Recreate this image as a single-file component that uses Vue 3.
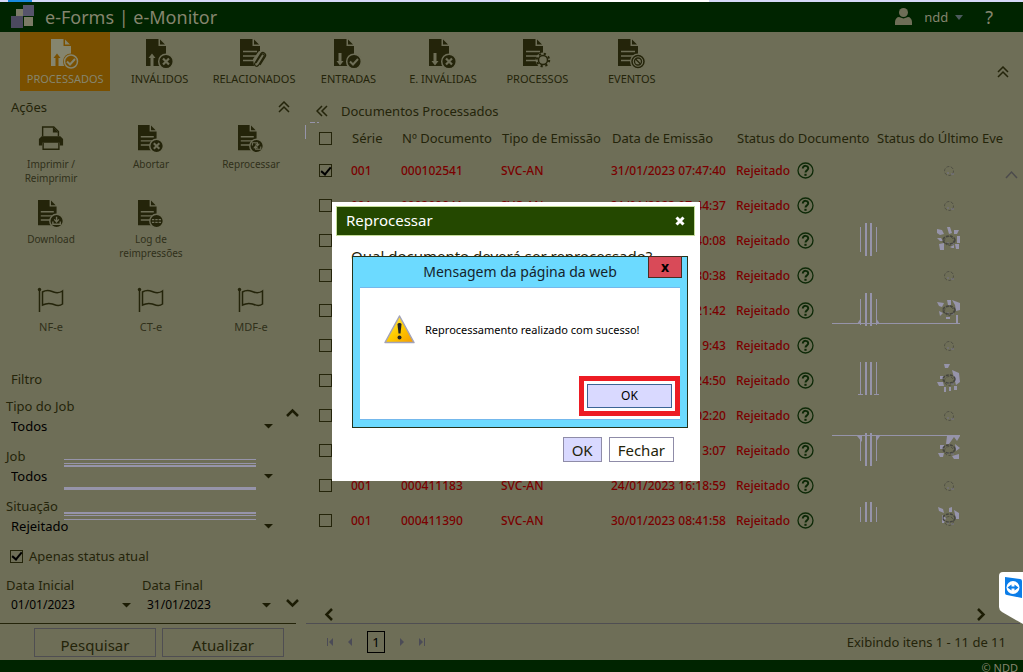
<script setup>
import { ref } from 'vue'

const tabs = [
  { label: 'PROCESSADOS', mark: 'up', badge: 'check', active: true },
  { label: 'INVÁLIDOS', mark: 'up', badge: 'cross' },
  { label: 'RELACIONADOS', mark: 'lines', badge: 'clip' },
  { label: 'ENTRADAS', mark: 'down', badge: 'check' },
  { label: 'E. INVÁLIDAS', mark: 'down', badge: 'cross' },
  { label: 'PROCESSOS', mark: 'lines', badge: 'gear' },
  { label: 'EVENTOS', mark: 'lines', badge: 'ban' },
]

const actions = [
  { label: 'Imprimir / Reimprimir', badge: 'print' },
  { label: 'Abortar', badge: 'cross' },
  { label: 'Reprocessar', badge: 'redo' },
  { label: 'Download', badge: 'save' },
  { label: 'Log de reimpressões', badge: 'csv' },
]

const flags = ['NF-e', 'CT-e', 'MDF-e']

const selects = [
  { id: 'tipo', label: 'Tipo do Job', value: 'Todos' },
  { id: 'job', label: 'Job', value: 'Todos' },
  { id: 'situacao', label: 'Situação', value: 'Rejeitado' },
]

const columns = ['Série', 'Nº Documento', 'Tipo de Emissão', 'Data de Emissão', 'Status do Documento', 'Status do Último Evento']

const rows = ref([
  { doc: '000102541', date: '31/01/2023 07:47:40', on: true },
  { doc: '000309841', date: '31/01/2023 07:44:37' },
  { doc: '000310127', date: '31/01/2023 07:40:08' },
  { doc: '000310204', date: '31/01/2023 07:30:38' },
  { doc: '000310355', date: '30/01/2023 17:21:42' },
  { doc: '000410712', date: '30/01/2023 16:19:43' },
  { doc: '000410820', date: '27/01/2023 15:24:50' },
  { doc: '000410955', date: '26/01/2023 14:02:20' },
  { doc: '000411021', date: '25/01/2023 10:13:07' },
  { doc: '000411183', date: '24/01/2023 16:18:59' },
  { doc: '000411390', date: '30/01/2023 08:41:58' },
])

const current = ref(true)
</script>

<template>
  <div class="app">
    <svg class="defs" aria-hidden="true">
      <symbol id="doc" viewBox="0 0 28 30">
        <path d="M0 0h12.500v7H20v20H0z" fill="currentColor" />
        <path d="M14 .5v5h5z" fill="currentColor" />
      </symbol>
      <symbol id="up" viewBox="0 0 28 30"><path d="M6 14.500l-3.500 4.500h2v8h3v-8h2z" fill="var(--bg)" /></symbol>
      <symbol id="down" viewBox="0 0 28 30"><path d="M6 26.500l-3.500-4.500h2v-8h3v8h2z" fill="var(--bg)" /></symbol>
      <symbol id="lines" viewBox="0 0 28 30"><path d="M3 12.500h14M3 17h14M3 21.500h12" stroke="var(--bg)" stroke-width="1.500" /></symbol>
      <symbol id="check" viewBox="0 0 28 30">
        <circle cx="20" cy="22.500" r="7.300" fill="currentColor" stroke="var(--bg)" stroke-width="1.500" />
        <path d="M16 22.500l3 3 5-5.500" fill="none" stroke="var(--bg)" stroke-width="2" />
      </symbol>
      <symbol id="check-open" viewBox="0 0 28 30">
        <circle cx="20" cy="22.500" r="8" fill="var(--bg)" />
        <circle cx="20" cy="22.500" r="6.500" fill="none" stroke="currentColor" stroke-width="1.500" />
        <path d="M16 22.500l3 3 5-5.500" fill="none" stroke="currentColor" stroke-width="2" />
      </symbol>
      <symbol id="cross" viewBox="0 0 28 30">
        <circle cx="20" cy="22.500" r="7.300" fill="currentColor" stroke="var(--bg)" stroke-width="1.500" />
        <path d="M17 19.500l6 6m0-6l-6 6" stroke="var(--bg)" stroke-width="2.200" />
      </symbol>
      <symbol id="clip" viewBox="0 0 28 30">
        <path d="M14 27l-1-7 6-8 7 1v7l-7 9z" fill="var(--bg)" />
        <path d="M16 24l5.500-8.500c1-1.500 3.500 0 2.500 1.700l-5.500 9c-1.500 2.300-4.800.4-3.600-2l5.600-9.200c2-3.200 6.500-.6 4.700 2.600L20 26" fill="none" stroke="currentColor" stroke-width="1.200" />
      </symbol>
      <symbol id="gear" viewBox="0 0 28 30">
        <circle cx="20" cy="21" r="7.500" fill="var(--bg)" />
        <circle cx="20" cy="21" r="6.200" fill="none" stroke="currentColor" stroke-width="2" stroke-dasharray="2.200 2.670" />
        <circle cx="20" cy="21" r="4.500" fill="none" stroke="currentColor" stroke-width="1.500" />
      </symbol>
      <symbol id="ban" viewBox="0 0 28 30">
        <circle cx="20" cy="22.500" r="8" fill="var(--bg)" />
        <circle cx="20" cy="22.500" r="6" fill="none" stroke="currentColor" stroke-width="1.500" />
        <circle cx="20" cy="22.500" r="3.500" fill="none" stroke="currentColor" stroke-width="1.300" />
        <path d="M17.500 20l5 5" stroke="currentColor" stroke-width="1.300" />
      </symbol>
      <symbol id="redo" viewBox="0 0 28 30">
        <circle cx="20" cy="22.500" r="7.300" fill="currentColor" stroke="var(--bg)" stroke-width="1.500" />
        <path d="M15.500 22v-3h5.500v3m-2-2l2 2.500 2-2.500M24.500 23v3H19v-3m2 2l-2-2.500-2 2.500" fill="none" stroke="var(--bg)" stroke-width="1.200" />
      </symbol>
      <symbol id="save" viewBox="0 0 28 30">
        <circle cx="20" cy="22.500" r="7.300" fill="currentColor" stroke="var(--bg)" stroke-width="1.500" />
        <path d="M20 18v5m-2.500-2.200L20 23.500l2.500-2.700M16 23v3h8v-3" fill="none" stroke="var(--bg)" stroke-width="1.500" />
      </symbol>
      <symbol id="csv" viewBox="0 0 28 30">
        <circle cx="20" cy="22.500" r="7.300" fill="currentColor" stroke="var(--bg)" stroke-width="1.500" />
        <path d="M15 21h10M15 24h10" fill="none" stroke="var(--bg)" stroke-width="1.200" stroke-dasharray="2.600 1" />
      </symbol>
      <symbol id="print" viewBox="0 0 28 30">
        <path d="M5 12V2h12l5 5v5" fill="none" stroke="currentColor" stroke-width="1.500" />
        <path d="M16 2v6h6z" fill="currentColor" />
        <path d="M4 12h20l3 3v7h-3.500v-3h-19v3H1v-7z" fill="currentColor" />
        <path d="M5.500 19v7h17v-7" fill="none" stroke="currentColor" stroke-width="1.500" />
      </symbol>
    </svg>

    <div class="strip"></div>
    <header class="top">
      <svg class="logo" width="24" height="24" viewBox="0 0 24 24">
        <path d="M12 0h11v11H12z" fill="#56546b" /><path d="M5 4h7v7H5z" fill="#7b7b66" />
        <path d="M0 11h12v12H0z" fill="#4b495e" /><path d="M13 12h9v9h-9z" fill="#7b7b66" />
      </svg>
      <h1>e-Forms | e-Monitor</h1>
      <svg width="17" height="18" viewBox="0 0 17 18"><circle cx="8.500" cy="4.500" r="4.500" fill="#6e6e57" /><path d="M0 17v-3c0-3 2-5 4-5l4.500 1.500L13 9c2 0 4 2 4 5v3z" fill="#6e6e57" /></svg>
      <button class="user">ndd <svg width="8" height="5" viewBox="0 0 8 5"><path d="M0 0h8L4 5z" fill="#4b5a5c" /></svg></button>
      <button class="help">?</button>
    </header>

    <nav class="toolbar">
      <div class="tabs">
        <button v-for="t in tabs" :key="t.label" class="tab" :class="{ active: t.active }">
          <svg width="28" height="30">
            <use href="#doc" /><use :href="'#' + t.mark" />
            <use :href="'#' + (t.active ? 'check-open' : t.badge)" />
          </svg>
          <span>{{ t.label }}</span>
        </button>
      </div>
      <button class="bare" aria-label="Recolher barra"><svg width="12" height="12" viewBox="0 0 12 12"><path d="M1 6l5-5 5 5M1 11l5-5 5 5" class="ln" /></svg></button>
    </nav>

    <div class="body">
      <aside>
        <div class="head"><h2>Ações</h2>
          <button class="bare" aria-label="Recolher ações"><svg width="12" height="12" viewBox="0 0 12 12"><path d="M1 6l5-5 5 5M1 11l5-5 5 5" class="ln" /></svg></button>
        </div>
        <div class="grid">
          <button v-for="a in actions" :key="a.label" class="act">
            <svg width="26" height="28" viewBox="0 0 28 30">
              <template v-if="a.badge !== 'print'"><use href="#doc" /><use href="#lines" /></template>
              <use :href="'#' + a.badge" />
            </svg>
            <span>{{ a.label }}</span>
          </button>
        </div>
        <div class="grid flags">
          <button v-for="f in flags" :key="f" class="act">
            <svg width="28" height="28" viewBox="0 0 28 28">
              <path d="M2.500 2v23" fill="none" stroke="#24240a" stroke-width="1.500" /><circle cx="2.500" cy="2.500" r="1.700" fill="#24240a" />
              <path d="M5.500 5c5-3 8-1 11 0s6 1 9-1v13c-4 3-7 1-10 0s-6-1-10 1z" fill="none" stroke="#24240a" stroke-width="1.500" />
            </svg>
            <span>{{ f }}</span>
          </button>
        </div>

        <h2 class="filter-title">Filtro</h2>
        <form class="filter" @submit.prevent>
          <svg class="streaks" width="192" height="61" viewBox="0 0 192 61" aria-hidden="true">
            <path d="M0 .5h192M0 4.500h192M0 56.500h192M0 60.500h192" stroke="#9694aa" /><path d="M0 7h192M0 54h192" stroke="#9694aa" stroke-width="2" /><path d="M0 29.500h192" stroke="#9694aa" stroke-width="3" />
          </svg>
          <div class="fields">
            <div v-for="s in selects" :key="s.id" class="field">
              <label :for="s.id">{{ s.label }}</label>
              <div class="pick">
                <select :id="s.id"><option>{{ s.value }}</option></select>
                <svg width="9" height="5" viewBox="0 0 9 5"><path d="M0 0h9L4.500 4.500z" fill="#1c1c04" /></svg>
              </div>
            </div>
            <button class="bare side" type="button" aria-label="Rolar para cima"><svg width="13" height="9" viewBox="0 0 13 9"><path d="M1 8l5.500-5.500L12 8" class="bold" /></svg></button>
          </div>
          <label class="only"><input v-model="current" type="checkbox" class="box">Apenas status atual</label>
          <div class="dates">
            <div class="date">
              <label for="d1">Data Inicial</label>
              <div class="pick"><input id="d1" type="text" value="01/01/2023"><svg width="9" height="5" viewBox="0 0 9 5"><path d="M0 0h9L4.500 4.500z" fill="#1c1c04" /></svg></div>
            </div>
            <div class="date">
              <label for="d2">Data Final</label>
              <div class="pick"><input id="d2" type="text" value="31/01/2023"><svg width="9" height="5" viewBox="0 0 9 5"><path d="M0 0h9L4.500 4.500z" fill="#1c1c04" /></svg></div>
            </div>
            <button class="bare down" type="button" aria-label="Rolar para baixo"><svg width="13" height="9" viewBox="0 0 13 9"><path d="M1 1l5.500 5.500L12 1" class="bold" /></svg></button>
          </div>
        </form>
        <div class="aside-foot"><button>Pesquisar</button><button>Atualizar</button></div>
      </aside>

      <main>
        <svg class="scratch" width="14" height="17" viewBox="0 0 14 17" aria-hidden="true"><path d="M.5 3v14M5 .5h5M12 .5h2" stroke="#9694aa" /></svg>
        <div class="title">
          <button class="bare" aria-label="Recolher painel"><svg width="12" height="12" viewBox="0 0 12 12"><path d="M6 1L1 6l5 5M11 1L6 6l5 5" class="ln" /></svg></button>
          <h2>Documentos Processados</h2>
        </div>
        <div class="table-wrap">
          <table>
            <colgroup><col class="c0"><col class="c1"><col class="c2"><col class="c3"><col class="c4"><col class="c5"><col></colgroup>
            <thead>
              <tr><th><input type="checkbox" class="box" aria-label="Selecionar todos"></th><th v-for="c in columns" :key="c">{{ c }}</th></tr>
            </thead>
            <tbody>
              <tr v-for="r in rows" :key="r.doc">
                <td><input v-model="r.on" type="checkbox" class="box" :aria-label="'Selecionar ' + r.doc"></td>
                <td>001</td><td>{{ r.doc }}</td><td>SVC-AN</td><td>{{ r.date }}</td>
                <td><div class="status">Rejeitado
                  <svg width="17" height="17" viewBox="0 0 17 17"><circle cx="8.500" cy="8.500" r="7.500" fill="none" stroke="#0e2a08" stroke-width="1.300" /><path d="M5.800 6.500c0-3.600 5.600-3.400 5.400 0C11.100 8.400 8.500 8.300 8.500 10.500" fill="none" stroke="#0e2a08" stroke-width="2" /><path d="M7.400 11.800h2.200v2H7.400z" fill="#0e2a08" /></svg>
                </div></td>
                <td><svg class="event" width="12" height="12" viewBox="0 0 12 12"><circle cx="6" cy="6" r="4.500" fill="none" stroke="#515145" stroke-dasharray="3 1.500" /><path d="M4 8h2M8 9h3" stroke="#77758a" /></svg></td>
              </tr>
            </tbody>
          </table>
          <svg class="noise" width="132" height="325" viewBox="0 0 132 325" aria-hidden="true">
            <path d="M30.500 26v25M46.500 26v25" stroke="#9694aa" />
            <path d="M36 22v33M41 22v33" stroke="#9694aa" stroke-width="2" />
            <path d="M107 28l5 1 2 4-4 1-3-2zM117 26h3l2 6-3 1zM124 29h5l-2 4h-3zM107 37h4l2 3h-3zM127 35h3v7h-3zM109 43l5-1v7h-4zM120 46l4-2v3h-2zM125 43h4v5h-3z" fill="#9694aa" />
            <ellipse cx="119" cy="39" rx="6" ry="4" class="smudge" />
            <g transform="translate(0 5)">
              <path d="M30.500 93v26M46.500 93v26M30.500 156v33M46.500 156v33M30.500 230v25M46.500 230v25M30.500 301v15M46.500 301v15M2 117.500h128M28 188.500h5M44 188.500h5M2 229.500h128" stroke="#9694aa" />
              <path d="M36 87v33M41 87v33M36 156v33M41 156v33M36 227v33M41 227v33M36 296v20M41 296v20" stroke="#9694aa" stroke-width="2" />
              <g fill="#9694aa">
                <path d="M27 118l4-6v6zM46 112l4 6h-4zM27 230h5v6zM46 230h4l-4 6z" />
                <path d="M107 96l7 1-2 4-3-1zM117 94h4v5h-3zM122 94l8 3v7l-4 1-1-6zM109 105l4 2-3 3zM116 111h4v2h-4zM126 109h2v8h-2z" />
                <path d="M114 158h6l-2 4h-3zM110 170h4v3h-4zM122 164l7 3 1 9-4 3zM107 176h6l1 4h-5zM114 181h2v5h-2zM119 181h2v4h-2zM124 180h3v4h-3z" />
                <path d="M117 230h13l-3 5-3-4-5 7h-3zM110 239h4v4h-4zM125 238l5 4-4 3zM108 247h6l-1 4h-3zM122 250l7-2v5h-5z" />
                <path d="M108 301l5 2 1 4-5-2zM119 302l3-1v5h-3zM124 304l5 3v6h-3zM112 309l4 3-2 5h-2z" />
              </g>
              <ellipse cx="119" cy="104" rx="6" ry="4" class="smudge" />
              <ellipse cx="119" cy="173" rx="6" ry="4" class="smudge" />
              <ellipse cx="119" cy="243" rx="6" ry="4" class="smudge" />
              <ellipse cx="119" cy="312" rx="6" ry="4" class="smudge" />
            </g>
          </svg>
          <button class="bare vup" aria-label="Rolar tabela"><svg width="13" height="9" viewBox="0 0 13 9"><path d="M1 8l5.500-6L12 8" fill="none" stroke="#4c4b4c" stroke-width="1.500" /></svg></button>
        </div>
        <div class="hscroll">
          <button class="bare" aria-label="Rolar à esquerda"><svg width="9" height="13" viewBox="0 0 9 13"><path d="M8 1L2.500 6.500 8 12" class="bold" /></svg></button>
          <button class="bare" aria-label="Rolar à direita"><svg width="9" height="13" viewBox="0 0 9 13"><path d="M1 1l5.500 5.500L1 12" class="bold" /></svg></button>
        </div>
        <div class="pager">
          <button class="bare" aria-label="Primeira"><svg width="6" height="8" viewBox="0 0 6 8"><path d="M0 0h1v8H0zM6 0v8L2 4z" fill="#4b4b56" /></svg></button>
          <button class="bare" aria-label="Anterior"><svg width="6" height="8" viewBox="0 0 6 8"><path d="M5 0v8L1 4z" fill="#4b4b56" /></svg></button>
          <button class="page">1</button>
          <button class="bare" aria-label="Próxima"><svg width="6" height="8" viewBox="0 0 6 8"><path d="M1 0v8l4-4z" fill="#4b4b56" /></svg></button>
          <button class="bare" aria-label="Última"><svg width="6" height="8" viewBox="0 0 6 8"><path d="M5 0h1v8H5zM0 0v8l4-4z" fill="#4b4b56" /></svg></button>
          <span class="count">Exibindo itens 1 - 11 de 11</span>
        </div>
      </main>
    </div>
    <footer>© NDD</footer>

    <section class="modal" role="dialog" aria-label="Reprocessar">
      <div class="modal-head"><h2>Reprocessar</h2>
        <button class="bare" aria-label="Fechar janela"><svg width="10" height="10" viewBox="0 0 10 10"><path d="M1.500 1.500l7 7m0-7l-7 7" stroke="#fff" stroke-width="3" /></svg></button>
      </div>
      <p>Qual documento deverá ser reprocessado?</p>
      <div class="modal-foot"><button class="primary">OK</button><button>Fechar</button></div>

      <section class="alert" role="alertdialog" aria-label="Mensagem da página da web">
        <h3>Mensagem da página da web</h3>
        <button class="x">x</button>
        <div class="alert-body">
          <div class="msg">
            <svg width="31" height="29" viewBox="0 0 31 29">
              <defs><linearGradient id="w" x1="0" y1="0" x2="1" y2="1"><stop offset="0" stop-color="#fff27a" /><stop offset=".5" stop-color="#fc0" /><stop offset="1" stop-color="#f59a00" /></linearGradient></defs>
              <path d="M15.500 1L30 27.500H1z" fill="url(#w)" stroke="#a3a3b8" stroke-width="1.500" stroke-linejoin="round" />
              <path d="M13.500 9.500c0-2 4-2 4 0l-1 9h-2z" fill="#222" /><circle cx="15.500" cy="22.500" r="2" fill="#222" />
            </svg>
            <span>Reprocessamento realizado com sucesso!</span>
          </div>
          <div class="ring"><button>OK</button></div>
        </div>
      </section>
    </section>

    <button class="remote" aria-label="Acesso remoto">
      <svg width="24" height="52" viewBox="0 0 24 52">
        <path d="M24 0H4Q0 0 0 4v31q0 3 3 5l21 12z" fill="#fff" />
        <path d="M6 5l15 2q2 0 2 2v17l-15-3q-2 0-2-2z" fill="#0b7de8" />
        <circle cx="14" cy="15.500" r="6.500" fill="#fff" /><path d="M8.500 15.500l4-3v2h3v-2l4 3-4 3v-2h-3v2z" fill="#0b7de8" />
      </svg>
    </button>
  </div>
</template>

<style>
body { margin: 0; background: #6e6e57; }
</style>

<style scoped>
* { box-sizing: border-box; }
.app { --bg: #6e6e57; position: relative; display: flex; flex-direction: column; min-height: 100vh; overflow: hidden; background: #6e6e57; color: #24240a; font: 13px/20px "Noto Sans", "Open Sans", sans-serif; }
button, input, select { font: inherit; color: inherit; background: none; border: 0; padding: 0; margin: 0; border-radius: 0; }
h1, h2, h3, p { margin: 0; font-weight: 400; font-size: 13px; }
svg { display: block; flex: none; }
.defs { position: absolute; width: 0; height: 0; }
.ln { fill: none; stroke: #24240a; stroke-width: 1.500; }
.bold { fill: none; stroke: #1c1c04; stroke-width: 2.500; }
.smudge { fill: none; stroke: #45453f; stroke-width: 1.500; stroke-dasharray: 3 1; }
.bare { display: flex; align-items: center; justify-content: center; }
.strip { height: 2px; background: linear-gradient(90deg, #d5d9f7 8px, #1a8be0 8px 32px, #d5d9f7 32px 510px, #fff 510px 709px, #d5d9f7 709px); }
.top { height: 30px; background: #002400; display: flex; align-items: center; padding: 0 30px 0 11px; color: #85856e; }
.top h1 { font-size: 18px; margin-left: 10px; margin-right: auto; color: #85856e; }
.user { display: flex; align-items: center; gap: 7px; margin-left: 12px; font-size: 13px; }
.help { font-size: 18px; margin-left: 22px; }
.toolbar { height: 60px; display: flex; justify-content: space-between; padding: 0 14px 0 20px; }
.tabs { display: grid; grid-template-columns: repeat(7, 1fr); gap: 4px; width: 657px; height: 59px; }
.tab { display: flex; flex-direction: column; align-items: center; padding-top: 7px; font-size: 11px; line-height: 20px; white-space: nowrap; }
.tab.active { --bg: #7a5000; background: #7a5000; color: #85856e; }
.toolbar > .bare { padding-top: 20px; }
.body { flex: 1; display: flex; }
aside { width: 300px; flex: none; display: flex; flex-direction: column; }
.head { display: flex; justify-content: space-between; padding: 5px 10px 0 11px; }
.grid { display: grid; grid-template-columns: repeat(3, 100px); grid-auto-rows: 75px; padding-left: 1px; }
.grid.flags { margin-top: 12px; }
.act { display: flex; flex-direction: column; align-items: center; padding: 8px 10px 0; font-size: 10px; line-height: 14px; color: #30301a; }
.act svg { color: #24240a; }
.act span { margin-top: 4px; }
.flags .act { font-size: 11px; }
.flags .act svg + span { margin-top: 5px; }
.filter-title { padding-left: 11px; margin-top: 15px; }
.filter { position: relative; padding: 7px 0 0 6px; }
.streaks { position: absolute; left: 64px; top: 70px; }
.fields { position: relative; display: grid; gap: 10px; width: 267px; }
.field label, .date label { display: block; }
.pick { display: flex; align-items: center; height: 20px; color: #000; }
.pick select { appearance: none; flex: 1; min-width: 0; padding-left: 5px; }
.pick input { flex: 1; min-width: 0; width: 0; padding-left: 5px; font-size: 12px; }
.side { position: absolute; right: -26px; top: 12px; }
.only { display: flex; align-items: center; gap: 6px; padding-left: 4px; margin-top: 10px; }
.box { appearance: none; width: 13px; height: 13px; border: 1px solid #24240a; display: grid; place-items: center; flex: none; }
.box:checked::before { content: ""; width: 4px; height: 8px; border: solid #000; border-width: 0 2px 2px 0; rotate: 40deg; translate: 0 -1px; }
.dates { display: flex; margin-top: 9px; }
.date:first-child { width: 125px; margin-right: 11px; }
.date { width: 129px; }
.down { margin: 20px 0 0 15px; height: 16px; }
.aside-foot { margin-top: auto; height: 37px; margin-right: 4px; border-top: 1px solid #24240a; display: flex; gap: 6px; padding: 4px 12px 3px 34px; }
.aside-foot button { flex: 1; border: 1px solid #4f4e52; font-size: 15px; padding-top: 4px; }
main { position: relative; flex: 1; min-width: 0; display: flex; flex-direction: column; padding: 7px 0 0 6px; }
.scratch { position: absolute; left: 5px; top: 30px; }
.title { display: flex; align-items: center; height: 24px; gap: 13px; padding-left: 10px; }
.table-wrap { position: relative; padding-right: 20px; }
table { width: 100%; table-layout: fixed; border-collapse: collapse; }
.c0 { width: 45px; } .c1 { width: 50px; } .c2 { width: 100px; } .c3 { width: 110px; } .c4 { width: 125px; } .c5 { width: 140px; }
th, td { padding: 0; text-align: left; white-space: nowrap; overflow: hidden; }
th { height: 30px; font-weight: 400; padding-left: 1px; }
td { height: 35px; font-size: 12px; font-weight: 500; color: #7a0000; }
th .box, td .box { margin-left: 13px; }
th .box { margin-left: 12px; }
.status { display: flex; align-items: center; gap: 7px; }
.event { margin-left: 67px; }
.noise { position: absolute; left: 524px; top: 78px; }
.vup { position: absolute; right: 5px; top: 47px; }
.hscroll { margin-top: auto; display: flex; justify-content: space-between; padding: 0 37px 2px 18px; }
.pager { height: 37px; border-top: 1px solid #4f4e52; margin-right: 3px; display: flex; align-items: center; gap: 14px; padding: 0 14px 0 21px; }
.page { width: 18px; height: 22px; border: 1px solid #000; color: #000; }
.count { margin-left: auto; }
footer { height: 12px; overflow: hidden; background: #002400; color: #85856e; text-align: right; padding-right: 5px; font-size: 11px; line-height: 16px; }
.modal { position: absolute; left: 332px; top: 202px; width: 368px; height: 279px; background: #fff; padding: 4px; color: #24240a; display: flex; flex-direction: column; }
.modal-head { height: 30px; background: #244800; border: 1px solid #c5dc9a; display: flex; align-items: center; justify-content: space-between; padding: 0 9px; margin-right: 1px; color: #fff; }
.modal-head h2 { font-size: 15px; line-height: 18px; padding-bottom: 2px; }
.modal p { font-size: 15px; padding: 10px 15px; white-space: nowrap; }
.modal-foot { margin-top: auto; display: flex; justify-content: flex-end; gap: 7px; padding: 0 22px 15px; }
.modal-foot button { height: 25px; border: 1px solid #8f8ca8; padding: 0 8px; font-size: 15px; background: #fff; }
.modal-foot .primary { background: #d9d9ff; }
.alert { position: absolute; left: 20px; top: 54px; width: 336px; height: 172px; border: 1px solid #24331c; background: #6cdaff; padding: 0 7px 7px; display: flex; flex-direction: column; }
.alert h3 { text-align: center; line-height: 30px; font-size: 14px; color: #14242c; }
.x { position: absolute; right: 5px; top: -1px; width: 34px; height: 22px; background: #d94a58; border: 1px solid #4a2c22; color: #000; font-weight: 700; font-size: 14px; line-height: 18px; }
.alert-body { flex: 1; background: #fff; border: 1px solid #74b8ec; border-width: 1px 0; display: flex; flex-direction: column; color: #000; }
.msg { display: flex; align-items: center; gap: 10px; padding: 27px 0 0 24px; font-size: 11px; white-space: nowrap; }
.ring { margin: auto 0 3px auto; width: 101px; height: 40px; border: 5px solid #ed1c24; padding: 3px; display: flex; }
.ring button { flex: 1; background: #d9d9ff; border: 1px solid #3c6496; font-size: 12px; }
.remote { position: absolute; right: 0; top: 572px; }
</style>
